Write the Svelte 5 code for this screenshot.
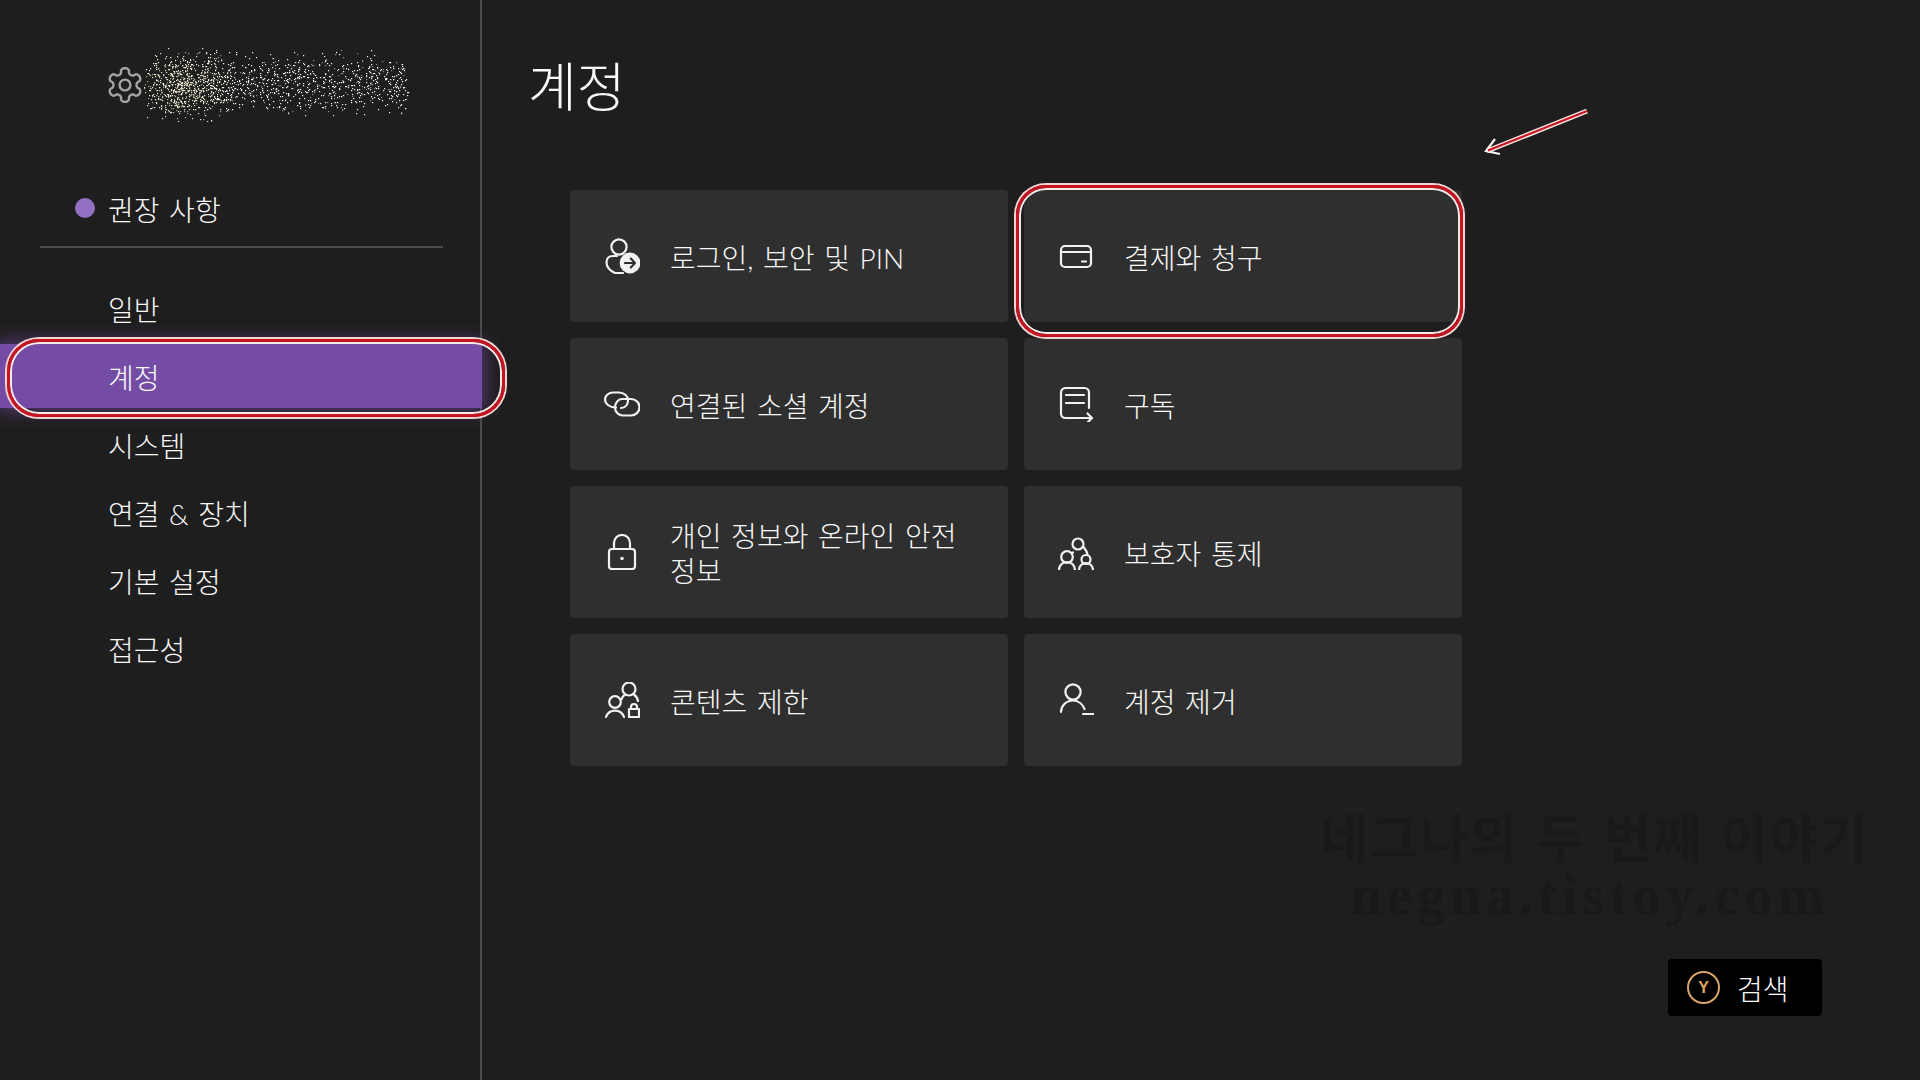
<script lang="ts">
  // seeded so the blurred profile name stays the same on every render
  let seed = 20240611;
  function rnd(): number {
    seed = (seed * 1664525 + 1013904223) % 4294967296;
    return seed / 4294967296;
  }
  function gauss(): number {
    return (rnd() + rnd() + rnd() + rnd() - 2) / 0.58;
  }

  type Dot = { x: number; y: number; c: string };
  const dots: Dot[] = [];
  for (let i = 0; i < 800; i++) {
    const x = 40 + gauss() * 21;
    const y = 38 + gauss() * 15;
    if (x > 0 && y > 0 && y < 76) dots.push({ x: Math.round(x), y: Math.round(y), c: rnd() > 0.35 ? '#e8e6cf' : '#a9a78f' });
  }
  for (let i = 0; i < 900; i++) {
    const x = 60 + rnd() * 205;
    const y = 35 + gauss() * 15;
    if (y > 2 && y < 68) dots.push({ x: Math.round(x), y: Math.round(y), c: rnd() > 0.25 ? '#f4f4ee' : '#8d8d84' });
  }

  // six-lobed cog outline
  let gear = '';
  for (let a = 0; a <= 360; a += 3) {
    const t = (a * Math.PI) / 180;
    const k = Math.cos(3 * (t + Math.PI / 2));
    const r = 14 + 2.9 * Math.sign(k * k - 0.42) * Math.pow(Math.abs(k * k - 0.42) * 1.7, 0.45);
    gear += `${a ? 'L' : 'M'}${(18 + r * Math.cos(t)).toFixed(2)} ${(18 + r * Math.sin(t)).toFixed(2)}`;
  }
  gear += 'Z';

  const navItems = ['일반', '계정', '시스템', '연결 & 장치', '기본 설정', '접근성'];

  const cards = [
    { id: 'login', label: '로그인, 보안 및 PIN' },
    { id: 'billing', label: '결제와 청구', marked: true },
    { id: 'social', label: '연결된 소셜 계정' },
    { id: 'subs', label: '구독' },
    { id: 'privacy', label: '개인 정보와 온라인 안전 정보' },
    { id: 'family', label: '보호자 통제' },
    { id: 'content', label: '콘텐츠 제한' },
    { id: 'remove', label: '계정 제거' },
  ];
</script>

<div class="screen">
  <aside class="sidebar">
    <div class="profile">
      <svg class="gear" width="36" height="36" viewBox="0 0 36 36" fill="none" stroke="#a3a3a3" stroke-width="2.4">
        <path d={gear} stroke-linejoin="round" />
        <circle cx="18" cy="18" r="5.4" />
      </svg>
      <svg class="noise" width="270" height="74" viewBox="0 0 270 74">
        {#each dots as d}
          <rect x={d.x} y={d.y} width="1.2" height="1.2" fill={d.c} />
        {/each}
      </svg>
    </div>

    <div class="recommended">
      <span class="dot"></span>
      <span class="nudge">권장 사항</span>
    </div>

    <nav class="nav">
      {#each navItems as item}
        <div class="nav-item" class:active={item === '계정'}>
          <span class="nudge">{item}</span>
          {#if item === '계정'}<span class="ring ring-nav"></span>{/if}
        </div>
      {/each}
    </nav>
  </aside>

  <main class="main">
    <h1 class="title">계정</h1>

    <div class="grid">
      {#each cards as card}
        <div class="card">
          {#if card.marked}<span class="ring ring-card"></span>{/if}
          <svg class="icon" width="36" height="36" viewBox="0 0 36 36" fill="none" stroke="#f2f2f2" stroke-width="2.2" stroke-linecap="round" stroke-linejoin="round">
            {#if card.id === 'login'}
              <circle cx="15" cy="9" r="7.6" />
              <path d="M13 18H9Q2.5 18 2.5 24.5T11 35H19" />
              <circle cx="26" cy="25" r="10.4" fill="#f2f2f2" stroke="none" />
              <path d="M21 25H31M26.8 20.6 31 25 26.8 29.4" stroke="#2f2f2f" stroke-width="2.2" />
            {:else if card.id === 'billing'}
              <rect x="3" y="8" width="30" height="21" rx="4" />
              <path d="M3 14H33M24 23.5H28" />
            {:else if card.id === 'social'}
              <path d="M12 21.5C5 21.5 1 17.5 1 13.5C1 9.5 5 6.5 9 6.5H15C20 6.5 24 10 24 14C24 19 21 22 17 22" />
              <path d="M18 13H27C32 13 35.5 17 35.5 21C35.5 26 31.5 29.5 27 29.5H19C14 29.5 11 25.5 11 21.5C11 17 14 13 18 13" />
            {:else if card.id === 'subs'}
              <path d="M31 22V6.5A4.5 4.5 0 0 0 26.500 2H7.500A4.500 4.500 0 0 0 3 6.500V27.500A4.500 4.500 0 0 0 7.500 32H33.500" />
              <path d="M29.500 27.500 34 32 29.500 36.500M8 9H26M8 17H26" />
            {:else if card.id === 'privacy'}
              <rect x="5" y="15" width="26" height="20" rx="3" />
              <path d="M10 15V9A8 8 0 0 1 26 9V15" />
              <circle cx="18" cy="24.500" r="1.800" fill="#f2f2f2" stroke="none" />
            {:else if card.id === 'family'}
              <circle cx="20" cy="10" r="5.500" />
              <circle cx="9" cy="23" r="5.800" />
              <circle cx="28" cy="25.500" r="4.500" />
              <path d="M1 36A8 8 0 0 1 17 36M21 36A7 7 0 0 1 35 36M15 18.500 14 19M26 13.500C27.500 15.500 29 18 29.500 20.500" />
            {:else if card.id === 'content'}
              <circle cx="25" cy="7" r="6.500" />
              <circle cx="11" cy="20" r="5.800" />
              <path d="M2 35A9.500 9.500 0 0 1 20 35M20.500 13C19 14 18 15.500 17.500 17.500M30 12.500C32 14 33.500 16 34 19" />
              <rect x="25" y="27" width="10" height="8" />
              <path d="M27 27V25A3 3 0 0 1 33 25V27" />
            {:else}
              <circle cx="15" cy="10" r="7.600" />
              <path d="M3 30C3 24 8 18.500 15 18.500C21 18.500 25 23 26.500 27M25 32H36" />
            {/if}
          </svg>
          <span class="label">{card.label}</span>
        </div>
      {/each}
    </div>

    <div class="footer">
      <div class="search">
        <span class="y-btn">Y</span>
        <span>검색</span>
      </div>
    </div>
  </main>

  <div class="watermark">
    <div>네그나의 두 번째 이야기</div>
    <div class="wm-url">negna.tistoy.com</div>
  </div>

  <svg class="arrow" width="112" height="50" viewBox="0 0 112 50" fill="none">
    <path d="M108 3 8 43" stroke="#f7e4e4" stroke-width="5" />
    <path d="M16 31 7 43 21 46" stroke="#f8f4f4" stroke-width="2.200" />
    <path d="M108 3 9 42.500" stroke="#c8141e" stroke-width="2.200" />
  </svg>
</div>

<style>
  :global(body) {
    margin: 0;
    background: #1e1e1e;
  }

  .screen {
    position: relative;
    display: flex;
    width: 1920px;
    height: 1080px;
    overflow: hidden;
    background: #1e1e1e;
    color: #f8f8f8;
    font-family: Lato, "Noto Sans CJK KR", "Noto Sans", sans-serif;
    font-size: 28px;
    font-weight: 300;
    word-spacing: 2px;
  }

  .nudge { padding-top: 2px; }

  .sidebar {
    box-sizing: border-box;
    flex: none;
    width: 482px;
    border-right: 2px solid #4b4b4b;
  }

  .profile {
    display: flex;
    align-items: center;
    height: 170px;
    padding-left: 107px;
  }

  .gear { flex: none; }

  .recommended {
    box-sizing: border-box;
    display: flex;
    align-items: center;
    gap: 13px;
    width: 403px;
    height: 78px;
    margin-left: 40px;
    padding-left: 35px;
    border-bottom: 2px solid #4b4b4b;
  }

  .dot {
    width: 20px;
    height: 20px;
    border-radius: 50%;
    background: #9370c2;
  }

  .nav {
    display: flex;
    flex-direction: column;
    gap: 4px;
    margin-top: 28px;
  }

  .nav-item {
    position: relative;
    display: flex;
    align-items: center;
    height: 64px;
    padding-left: 108px;
  }

  .nav-item.active {
    margin-right: -2px;
    background: #754ca5;
    box-shadow: 0 0 16px 4px rgba(117, 76, 165, 0.55);
    z-index: 1;
  }

  .ring {
    position: absolute;
    box-sizing: border-box;
    border: 3px solid #c8141e;
    box-shadow: 0 0 0 2px #f5d4d4, inset 0 0 0 2px #f5eaea;
    pointer-events: none;
    z-index: 2;
  }

  .ring-nav {
    top: -5px;
    left: 7px;
    width: 498px;
    height: 78px;
    border-radius: 32px;
  }

  .ring-card {
    top: -5px;
    left: -8px;
    right: -1px;
    bottom: -15px;
    border-radius: 30px;
  }

  .main {
    display: flex;
    flex: 1;
    flex-direction: column;
    box-sizing: border-box;
    padding: 0 98px 64px 46px;
  }

  .title {
    height: 190px;
    margin: 0;
    padding-top: 52px;
    box-sizing: border-box;
    font-size: 53px;
    font-weight: 300;
    line-height: 70px;
  }

  .grid {
    display: grid;
    grid-template-columns: repeat(2, 438px);
    grid-auto-rows: 132px;
    gap: 16px;
    margin-left: 42px;
  }

  .card {
    position: relative;
    display: flex;
    align-items: center;
    gap: 30px;
    padding: 0 34px;
    background: #2f2f2f;
    border-radius: 4px;
  }

  .icon { flex: none; }

  .label {
    padding-top: 4px;
    line-height: 35px;
  }

  .footer {
    display: flex;
    justify-content: flex-end;
    margin-top: auto;
  }

  .search {
    display: flex;
    align-items: center;
    gap: 17px;
    box-sizing: border-box;
    width: 154px;
    height: 57px;
    padding-left: 19px;
    background: #000;
    border-radius: 4px;
    color: #fff;
  }

  .y-btn {
    display: flex;
    align-items: center;
    justify-content: center;
    box-sizing: border-box;
    width: 33px;
    height: 33px;
    border: 2px solid #d9a468;
    border-radius: 50%;
    color: #e0a45e;
    font-family: "Liberation Sans", sans-serif;
    font-size: 16px;
    font-weight: 700;
  }

  /* faint blog stamp baked into the capture */
  .watermark {
    position: absolute;
    left: 1319px;
    top: 813px;
    width: 552px;
    color: #191919;
    font-family: "Liberation Serif", "Noto Sans CJK KR", serif;
    font-size: 52px;
    font-weight: 700;
    line-height: 55px;
    text-align: center;
    letter-spacing: 2px;
    white-space: nowrap;
  }

  .wm-url {
    margin-left: -10px;
    font-size: 56px;
    letter-spacing: 5px;
  }

  .arrow {
    position: absolute;
    left: 1479px;
    top: 108px;
  }
</style>
